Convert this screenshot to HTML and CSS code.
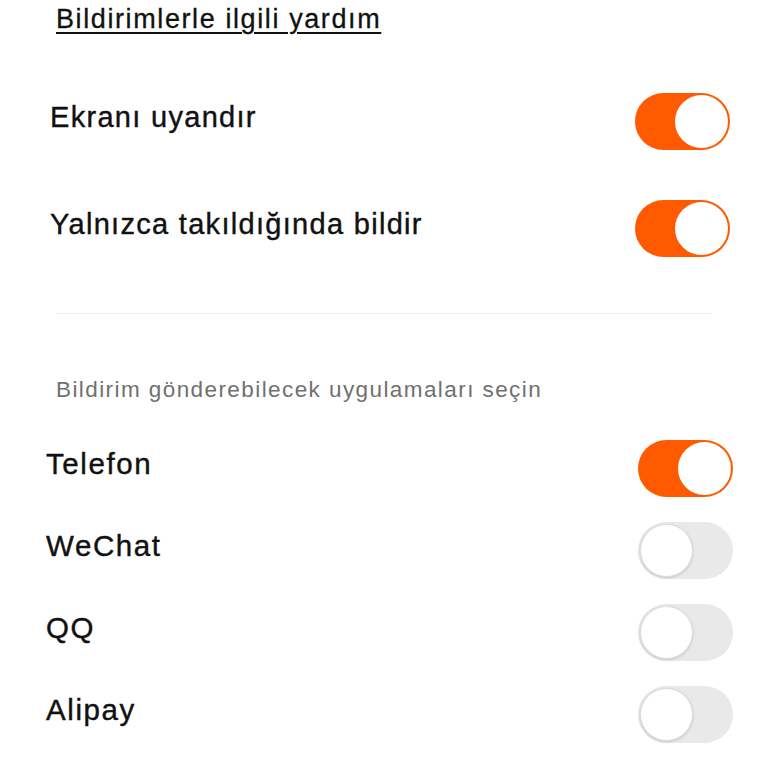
FILE: index.html
```html
<!DOCTYPE html>
<html lang="tr">
<head>
<meta charset="utf-8">
<link rel="stylesheet" href="styles.css">
</head>
<body>
<div class="page">
  <div class="help"><span class="help-link">Bildirimlerle ilgili yardım</span></div>
  <section class="top">
    <div class="row row-top">
      <span class="label">Ekranı uyandır</span>
      <span class="toggle on"><span class="knob"></span></span>
    </div>
    <div class="row row-top">
      <span class="label">Yalnızca takıldığında bildir</span>
      <span class="toggle on"><span class="knob"></span></span>
    </div>
  </section>
  <div class="divider"></div>
  <div class="subhead">Bildirim gönderebilecek uygulamaları seçin</div>
  <section class="apps">
    <div class="row row-app">
      <span class="label">Telefon</span>
      <span class="toggle on"><span class="knob"></span></span>
    </div>
    <div class="row row-app">
      <span class="label">WeChat</span>
      <span class="toggle off"><span class="knob"></span></span>
    </div>
    <div class="row row-app">
      <span class="label">QQ</span>
      <span class="toggle off"><span class="knob"></span></span>
    </div>
    <div class="row row-app">
      <span class="label">Alipay</span>
      <span class="toggle off"><span class="knob"></span></span>
    </div>
    <div class="row row-app">
      <span class="label"></span>
      <span class="toggle off"><span class="knob"></span></span>
    </div>
  </section>
</div>
</body>
</html>
```
FILE: styles.css
```css
html, body {
  margin: 0;
  padding: 0;
  background: #ffffff;
}
body {
  font-family: "Liberation Sans", Arial, sans-serif;
  color: #111111;
  width: 768px;
  height: 768px;
  overflow: hidden;
}
.page {
  display: flex;
  flex-direction: column;
}
.help {
  padding: 2px 0 0 56px;
  height: 38px;
  font-size: 27px;
  line-height: 34px;
  letter-spacing: 1.6px;
}
.help-link {
  text-decoration: underline;
  text-underline-offset: 4px;
  text-decoration-thickness: 2px;
  color: #111;
  -webkit-text-stroke: 0.3px #111;
}
.top {
  display: flex;
  flex-direction: column;
  padding: 53px 38px 0 50px;
}
.row {
  display: flex;
  align-items: center;
  justify-content: space-between;
}
.row-top {
  height: 57px;
  margin-bottom: 50px;
}
.label {
  font-size: 29px;
  line-height: 34px;
  letter-spacing: 1.3px;
  margin-top: -10px;
  -webkit-text-stroke: 0.4px #111;
}
.row-app .label {
  font-size: 29.5px;
  letter-spacing: 1.6px;
  margin-top: -10px;
}
.divider {
  height: 1px;
  background: #ececec;
  margin: 6px 56px 0 56px;
}
.subhead {
  padding: 62px 0 0 56px;
  font-size: 22.5px;
  line-height: 28px;
  letter-spacing: 1.42px;
  color: #707070;
}
.apps {
  display: flex;
  flex-direction: column;
  padding: 36px 35px 0 46px;
}
.row-app {
  height: 57px;
  margin-bottom: 25px;
}
.toggle {
  width: 95px;
  height: 57px;
  border-radius: 29px;
  box-sizing: border-box;
  display: flex;
  align-items: center;
  padding: 0 2px;
  flex-shrink: 0;
}
.toggle .knob {
  width: 53px;
  height: 53px;
  border-radius: 50%;
  background: #ffffff;
  box-sizing: border-box;
}
.toggle.on {
  background: #ff5a00;
  justify-content: flex-end;
}
.toggle.off {
  background: #e9e9e9;
  justify-content: flex-start;
}
.toggle.off .knob {
  border: 1px solid #dcdcdc;
  box-shadow: 0 1px 3px rgba(0,0,0,0.15);
}
```
